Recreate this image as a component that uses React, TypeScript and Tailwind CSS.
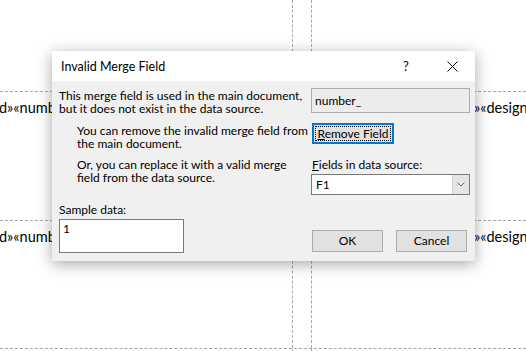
import React from "react";

const dash = "border-dashed border-[#a6a6a6]";

function DocRow({ left, right, h }: { left?: React.ReactNode; right?: React.ReactNode; h: string }) {
  return (
    <div className={`flex border-b ${dash} ${h}`}>
      <div className={`w-[294px] shrink-0 border-r ${dash} overflow-hidden whitespace-nowrap pt-[7px] -ml-px`}>{left}</div>
      <div className="w-[18px] shrink-0" />
      <div className={`flex-1 border-l ${dash} overflow-hidden whitespace-nowrap pt-[7px]`}>{right}</div>
    </div>
  );
}

function Btn({ children, focused }: { children: React.ReactNode; focused?: boolean }) {
  if (focused) {
    return (
      <div className="w-[82px] h-[21px] border-2 border-[#0078d7] bg-[#e1e1e1] p-px">
        <div className="h-full w-full border border-dotted border-black flex items-center justify-center leading-none whitespace-nowrap">
          {children}
        </div>
      </div>
    );
  }
  return (
    <div className="w-[71px] h-[22px] border border-[#adadad] bg-[#e1e1e1] flex items-center justify-center leading-none">
      {children}
    </div>
  );
}

// the part of each table row that shows on either side of the dialog
const leftCell = <span className="inline-block w-[53px] overflow-hidden align-top">d»«numb</span>;
const rightCell = (
  <span>
    <span className="inline-block w-[162px]" />
    »«designation»
  </span>
);

export default function App() {
  const docText = "text-[14.5px] leading-[18px] text-black font-['Lato',sans-serif]";
  return (
    <div className="relative w-[526px] h-[351px] overflow-hidden bg-white">
      {/* document table behind the dialog */}
      <div className={docText}>
        <DocRow h="h-[92px]" />
        <DocRow h="h-[129px]" left={leftCell} right={rightCell} />
        <DocRow h="h-[128px]" left={leftCell} right={rightCell} />
        <DocRow h="h-[20px]" />
      </div>

      {/* dialog */}
      <div className="absolute left-[52px] top-[51px] w-[423px] bg-[#f0f0f0] shadow-[0_3px_14px_rgba(0,0,0,0.35)] font-['Lato',sans-serif] text-[12px] leading-[13px] text-black">
        <div className="h-[30px] bg-white flex items-center">
          <span className="pl-[9px] text-[12.5px]">Invalid Merge Field</span>
          <div className="ml-auto flex h-full">
            <div className="w-[46px] flex items-center justify-center text-[13px]">?</div>
            <div className="w-[46px] flex items-center justify-center">
              <svg width="11" height="11" viewBox="0 0 11 11">
                <path d="M0.5 0.5 L10.5 10.5 M10.5 0.5 L0.5 10.5" stroke="#000" strokeWidth="1" />
              </svg>
            </div>
          </div>
        </div>

        <div className="pt-[7px] pl-[7px] pr-[5px] pb-[8px]">
          <div className="grid grid-cols-[252px_159px]">
            <div className="whitespace-nowrap translate-y-px">
              This merge field is used in the main document,
              <br />
              but it does not exist in the data source.
            </div>
            <div className="h-[25px] border border-[#adadad] bg-[#ececec] flex items-center px-[3px]">number_</div>
          </div>

          <div className="grid grid-cols-[252px_159px] mt-[9px]">
            <div className="whitespace-nowrap pl-[18px] translate-y-px">
              You can remove the invalid merge field from
              <br />
              the main document.
            </div>
            <div className="pl-px">
              <Btn focused>
                <span>
                  <span className="underline">R</span>emove Field
                </span>
              </Btn>
            </div>
          </div>

          <div className="grid grid-cols-[252px_159px] mt-[8px]">
            <div className="whitespace-nowrap pl-[18px] translate-y-px">
              Or, you can replace it with a valid merge
              <br />
              field from the data source.
            </div>
            <div>
              <div className="pl-px translate-y-px">
                <span className="underline">F</span>ields in data source:
              </div>
              <div className="mt-[4px] h-[21px] border border-[#7a7a7a] bg-white flex">
                <span className="flex-1 flex items-center pl-[4px]">F1</span>
                <div className="w-[17px] bg-[#e5e5e5] border-l border-[#cfcfcf] flex items-center justify-center">
                  <svg width="8" height="5" viewBox="0 0 8 5">
                    <path d="M0.5 0.5 L4 4 L7.5 0.5" fill="none" stroke="#666" strokeWidth="1" />
                  </svg>
                </div>
              </div>
            </div>
          </div>

          <div className="grid grid-cols-[252px_159px] mt-[8px] items-end">
            <div>
              <div>Sample data:</div>
              <div className="mt-[3px] w-[125px] h-[34px] border border-[#7a7a7a] bg-white pl-[3px] pt-[2px]">1</div>
            </div>
            <div className="flex gap-[13px] pl-px mb-px">
              <Btn>OK</Btn>
              <Btn>Cancel</Btn>
            </div>
          </div>
        </div>
      </div>
    </div>
  );
}
